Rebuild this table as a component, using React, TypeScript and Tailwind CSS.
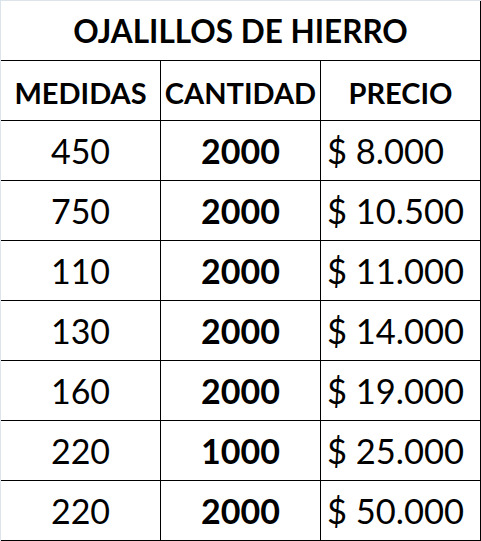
import React from "react";

const rows = [
  { medida: "450", cantidad: "2000", precio: "$ 8.000" },
  { medida: "750", cantidad: "2000", precio: "$ 10.500" },
  { medida: "110", cantidad: "2000", precio: "$ 11.000" },
  { medida: "130", cantidad: "2000", precio: "$ 14.000" },
  { medida: "160", cantidad: "2000", precio: "$ 19.000" },
  { medida: "220", cantidad: "1000", precio: "$ 25.000" },
  { medida: "220", cantidad: "2000", precio: "$ 50.000" },
];

const App: React.FC = () => {
  return (
    <div
      className="w-[481px] h-[541px] bg-white border-t border-l border-[#dde3ea] text-black overflow-hidden"
      style={{ fontFamily: "Lato, 'Open Sans', sans-serif" }}
    >
      {/* Title */}
      <div className="h-[60px] border-b border-r border-black flex items-center justify-center pt-[3px]">
        <span className="font-bold text-[31.5px] leading-none">OJALILLOS DE HIERRO</span>
      </div>

      {/* Header */}
      <div className="flex h-[60px] border-b border-black">
        <div className="w-[160px] border-r border-black flex items-center justify-center pt-[3px]">
          <span className="font-bold text-[29px] leading-none">MEDIDAS</span>
        </div>
        <div className="w-[160px] border-r border-black flex items-center justify-center pt-[3px]">
          <span className="font-bold text-[29px] leading-none">CANTIDAD</span>
        </div>
        <div className="w-[160px] border-r border-black flex items-center justify-center pt-[3px]">
          <span className="font-bold text-[29px] leading-none">PRECIO</span>
        </div>
      </div>

      {/* Data rows */}
      {rows.map((row, i) => (
        <div key={i} className="flex h-[60px] border-b border-black">
          <div className="w-[160px] border-r border-black flex items-center justify-center pt-[1px]">
            <span className="text-[34px] leading-none">{row.medida}</span>
          </div>
          <div className="w-[160px] border-r border-black flex items-center justify-center pt-[1px]">
            <span className="font-bold text-[34px] leading-none">{row.cantidad}</span>
          </div>
          <div className="w-[160px] border-r border-black flex items-center pl-[6px] pt-[1px]">
            <span className="text-[34.5px] leading-none">{row.precio}</span>
          </div>
        </div>
      ))}
    </div>
  );
};

export default App;
